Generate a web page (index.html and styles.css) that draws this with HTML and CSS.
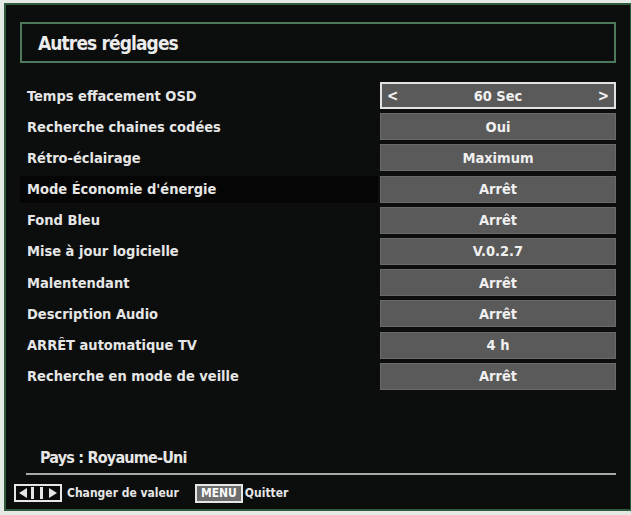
FILE: index.html
```html
<!DOCTYPE html>
<html lang="fr">
<head>
<meta charset="utf-8">
<title>Autres réglages</title>
<link rel="stylesheet" href="styles.css">
</head>
<body>
<div class="screen">
  <div class="title-box"><span class="title">Autres réglages</span></div>
  <div class="rows">
    <div class="row"><div class="label">Temps effacement OSD</div><div class="value selected"><span class="arr">&lt;</span><span>60 Sec</span><span class="arr">&gt;</span></div></div>
    <div class="row"><div class="label">Recherche chaines codées</div><div class="value">Oui</div></div>
    <div class="row"><div class="label">Rétro-éclairage</div><div class="value">Maximum</div></div>
    <div class="row band"><div class="label">Mode Économie d'énergie</div><div class="value">Arrêt</div></div>
    <div class="row"><div class="label">Fond Bleu</div><div class="value">Arrêt</div></div>
    <div class="row"><div class="label">Mise à jour logicielle</div><div class="value">V.0.2.7</div></div>
    <div class="row"><div class="label">Malentendant</div><div class="value">Arrêt</div></div>
    <div class="row"><div class="label">Description Audio</div><div class="value">Arrêt</div></div>
    <div class="row"><div class="label">ARRÊT automatique TV</div><div class="value">4 h</div></div>
    <div class="row"><div class="label">Recherche en mode de veille</div><div class="value">Arrêt</div></div>
  </div>
  <div class="spacer"></div>
  <div class="country">Pays : Royaume-Uni</div>
  <div class="sep"></div>
  <div class="footer">
    <span class="keys">
      <svg width="48" height="18" viewBox="0 0 48 18">
        <rect x="1" y="1" width="46" height="16" fill="#0b0b0b" stroke="#e6e6e6" stroke-width="2"/>
        <polygon points="5,9 13,4 13,14" fill="#e6e6e6"/>
        <rect x="17" y="3" width="3" height="12" fill="#e6e6e6"/>
        <rect x="26" y="3" width="3" height="12" fill="#e6e6e6"/>
        <polygon points="43,9 35,4 35,14" fill="#e6e6e6"/>
      </svg>
    </span>
    <span class="hint">Changer de valeur</span>
    <span class="menu">MENU</span>
    <span class="hint">Quitter</span>
  </div>
</div>
</body>
</html>
```

FILE: styles.css
```css
* { box-sizing: border-box; }
html, body { margin: 0; padding: 0; }
body {
  background: #e4e9e5;
  width: 631px;
  height: 515px;
  overflow: hidden;
  font-family: "DejaVu Sans", "Liberation Sans", sans-serif;
  font-stretch: condensed;
  color: #e9e9e9;
}
.screen {
  margin: 3px 0 0 4px;
  width: 627px;
  height: 508px;
  border: 2px solid #2e5b3c;
  border-right-width: 1px;
  background: #0c0e0d;
  display: flex;
  flex-direction: column;
  padding: 17px 14px 5px 14px;
}
.title-box {
  height: 41px;
  border: 2px solid #4d7a5a;
  display: flex;
  align-items: center;
  padding-left: 16px;
  flex: none;
}
.title {
  font-size: 19px;
  font-weight: bold;
  letter-spacing: -0.9px;
  color: #ececec;
}
.rows {
  margin-top: 19px;
  display: grid;
  grid-auto-rows: 27px;
  row-gap: 4.2px;
  flex: none;
}
.row {
  display: grid;
  grid-template-columns: 1fr 236px;
  column-gap: 2px;
  align-items: stretch;
}
.row.band .label { background: #050505; }
.label {
  padding-left: 7px;
  font-size: 14.5px;
  font-weight: bold;
  display: flex;
  align-items: center;
  color: #e6e6e6;
}
.value {
  background: #5a5a5a;
  border: 1px solid #6a6a6a;
  display: flex;
  align-items: center;
  justify-content: center;
  font-size: 14.5px;
  font-weight: bold;
  color: #f0f0f0;
}
.value.selected {
  border: 2px solid #e2e2e2;
  justify-content: space-between;
  padding: 0 5px;
}
.arr { font-weight: bold; font-size: 15px; }
.spacer { flex: 1; }
.country {
  padding-left: 20px;
  font-size: 16px;
  font-weight: bold;
  letter-spacing: -0.8px;
  color: #e6e6e6;
  line-height: 20px;
}
.sep {
  margin: 5px 0 0 6px;
  height: 2px;
  background: #a9a9a9;
}
.footer {
  display: flex;
  align-items: center;
  height: 22px;
  margin-top: 7px;
  margin-left: -6px;
  font-size: 12px;
  font-weight: bold;
  color: #e6e6e6;
}
.keys { display: flex; margin-right: 5px; }
.hint { margin-right: 16px; }
.hint:last-child { margin-right: 0; }
.menu {
  margin-right: 2px;
  border: 2px solid #e6e6e6;
  background: #6e6e6e;
  padding: 0 4px;
  font-size: 12px;
  line-height: 15px;
  color: #fafafa;
}
```
